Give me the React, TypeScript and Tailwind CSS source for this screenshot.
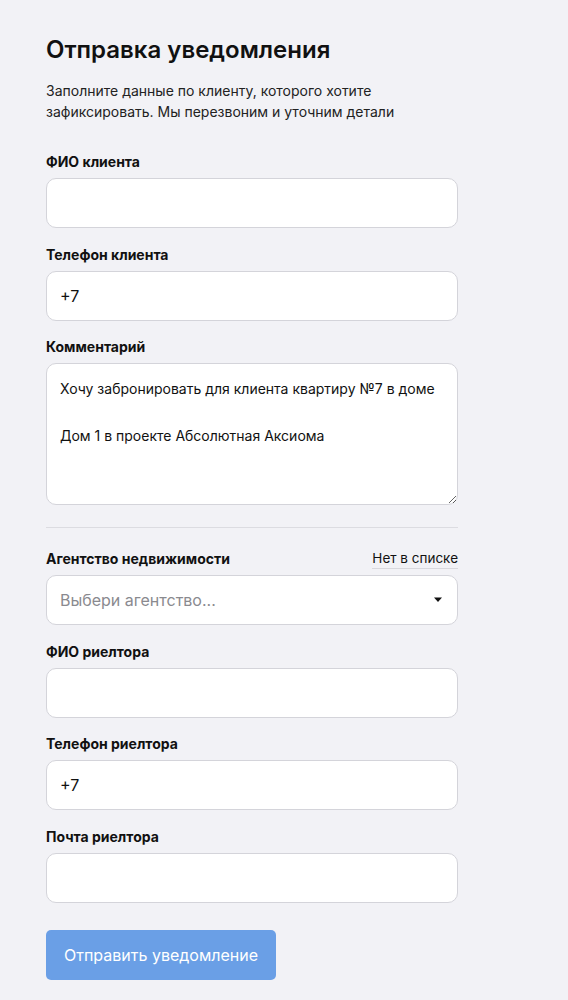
const FONT = "font-['Inter','Noto_Sans',sans-serif]";

function Field({ label, value }: { label: string; value?: string }) {
  return (
    <div className="flex flex-col">
      <label className="text-[14px] font-bold leading-5 text-[#111]">{label}</label>
      <input
        defaultValue={value}
        className="mt-[6px] h-[50px] rounded-[10px] border border-[#d4d4da] bg-white px-[13px] text-[16px] text-[#111] outline-none"
      />
    </div>
  );
}

export default function App() {
  return (
    <main className={`min-h-[1000px] bg-[#f2f2f6] ${FONT}`}>
      <div className="mx-[46px] w-[412px] pt-[34px]">
        <h1 className="text-[24px] font-semibold leading-8 text-[#111]">
          Отправка уведомления
        </h1>
        <p className="mt-[14px] text-[14px] leading-[21px] text-[#222]">
          Заполните данные по клиенту, которого хотите зафиксировать. Мы перезвоним и уточним детали
        </p>

        <div className="mt-[30px] flex flex-col gap-[16.5px]">
          <Field label="ФИО клиента" />
          <Field label="Телефон клиента" value="+7" />
          <div className="flex flex-col">
            <label className="text-[14px] font-bold leading-5 text-[#111]">Комментарий</label>
            <textarea
              defaultValue={"Хочу забронировать для клиента квартиру №7 в доме\n\nДом 1 в проекте Абсолютная Аксиома"}
              className="mt-[6px] h-[142px] resize-y rounded-[10px] border border-[#d4d4da] bg-white px-[13px] py-[13px] text-[14px] leading-[23.5px] text-[#111] outline-none"
            />
          </div>
        </div>

        <div className="mt-[22px] h-px bg-[#dcdce1]" />

        <div className="mt-[20px] flex flex-col gap-[16.5px]">
          <div className="flex flex-col">
            <div className="flex items-end justify-between">
              <span className="text-[14px] font-bold leading-5 text-[#111]">Агентство недвижимости</span>
              <a className="border-b border-[#d8d8dd] text-[13.5px] leading-5 text-[#111]">Нет в списке</a>
            </div>
            <button className="mt-[6px] flex h-[50px] items-center justify-between rounded-[10px] border border-[#d4d4da] bg-white px-[13px] text-left">
              <span className="text-[16px] text-[#8a8a8f]">Выбери агентство...</span>
              <svg width="10" height="6" viewBox="0 0 10 6" className="mr-[1px]">
                <path d="M1 0.5h8L5 5z" fill="#111" />
              </svg>
            </button>
          </div>
          <Field label="ФИО риелтора" />
          <Field label="Телефон риелтора" value="+7" />
          <Field label="Почта риелтора" />
        </div>

        <button className="mt-[27.5px] h-[50px] w-[230px] rounded-[5px] bg-[#6a9fe6] text-[16px] text-white">
          Отправить уведомление
        </button>
      </div>
    </main>
  );
}
